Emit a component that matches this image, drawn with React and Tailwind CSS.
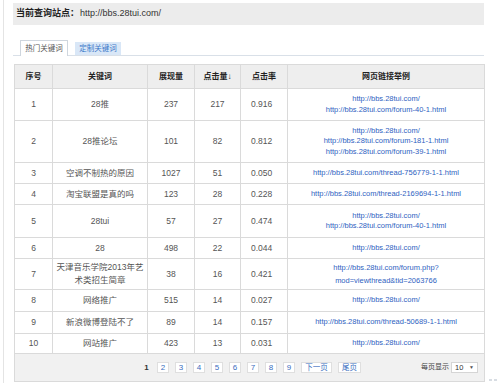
import React from "react";

const rows = [
  { id: 1, kw: "28推", shown: 237, clicks: 217, rate: "0.916", h: "h-[32px]", links: ["http://bbs.28tui.com/", "http://bbs.28tui.com/forum-40-1.html"] },
  { id: 2, kw: "28推论坛", shown: 101, clicks: 82, rate: "0.812", h: "h-[42px]", links: ["http://bbs.28tui.com/", "http://bbs.28tui.com/forum-181-1.html", "http://bbs.28tui.com/forum-39-1.html"] },
  { id: 3, kw: "空调不制热的原因", shown: 1027, clicks: 51, rate: "0.050", h: "h-[21px]", links: ["http://bbs.28tui.com/thread-756779-1-1.html"] },
  { id: 4, kw: "淘宝联盟是真的吗", shown: 123, clicks: 28, rate: "0.228", h: "h-[21px]", links: ["http://bbs.28tui.com/thread-2169694-1-1.html"] },
  { id: 5, kw: "28tui", shown: 57, clicks: 27, rate: "0.474", h: "h-[33px]", links: ["http://bbs.28tui.com/", "http://bbs.28tui.com/forum-40-1.html"] },
  { id: 6, kw: "28", shown: 498, clicks: 22, rate: "0.044", h: "h-[21px]", links: ["http://bbs.28tui.com/"] },
  { id: 7, kw: ["天津音乐学院2013年艺", "术类招生简章"], shown: 38, clicks: 16, rate: "0.421", h: "h-[31px]", links: ["http://bbs.28tui.com/forum.php?", "mod=viewthread&tid=2063766"] },
  { id: 8, kw: "网络推广", shown: 515, clicks: 14, rate: "0.027", h: "h-[22px]", links: ["http://bbs.28tui.com/"] },
  { id: 9, kw: "新浪微博登陆不了", shown: 89, clicks: 14, rate: "0.157", h: "h-[22px]", links: ["http://bbs.28tui.com/thread-50689-1-1.html"] },
  { id: 10, kw: "网站推广", shown: 423, clicks: 13, rate: "0.031", h: "h-[20px]", links: ["http://bbs.28tui.com/"] },
];

const font = "font-['Liberation_Sans','Noto_Sans_CJK_SC',sans-serif]";

const App = () => {
  return (
    <div className={`w-[500px] h-[383px] bg-white flex overflow-hidden ${font}`}>
      {/* left frame line */}
      <div className="ml-[3px] w-px h-full bg-[#e4e4e4]" />

      <div className="ml-[9px] w-[471px] flex flex-col">
        {/* current site */}
        <div className="mt-[3px] h-[22px] bg-[#ececec] flex items-center pl-[3px] text-[9px] text-[#333]">
          <span className="font-bold text-[#222]">当前查询站点：</span>
          <span className="ml-[1px]">http://bbs.28tui.com/</span>
        </div>

        {/* tabs */}
        <div className="mt-[15px] h-[16px] flex items-end border-b border-[#d9e0e8]">
          <div className="ml-[7px] w-[48px] h-[16px] bg-white border border-b-0 border-[#cfd6de] flex items-center justify-center text-[7.5px] text-[#555] -mb-px">
            热门关键词
          </div>
          <div className="ml-[7px] w-[46px] h-[13px] bg-[#d9e7f7] flex items-center justify-center text-[7.5px] text-[#3b78c9]">
            定制关键词
          </div>
        </div>

        {/* table */}
        <div className="mt-[8px] ml-px w-[470px]">
          <table className="w-[470px] border-collapse table-fixed text-[#555]">
            <colgroup>
              <col className="w-[38px]" />
              <col className="w-[95px]" />
              <col className="w-[47px]" />
              <col className="w-[46px]" />
              <col className="w-[47px]" />
              <col className="w-[197px]" />
            </colgroup>
            <thead>
              <tr className="h-[24px] bg-[#eeeeee] text-[8px] font-bold text-[#222]">
                <th className="border border-[#dadada]">序号</th>
                <th className="border border-[#dadada]">关键词</th>
                <th className="border border-[#dadada]">展现量</th>
                <th className="border border-[#dadada]">点击量↓</th>
                <th className="border border-[#dadada]">点击率</th>
                <th className="border border-[#dadada]">网页链接举例</th>
              </tr>
            </thead>
            <tbody>
              {rows.map((r) => (
                <tr key={r.id} className={`${r.h} bg-white`}>
                  <td className="border border-[#dadada] text-center text-[8.5px]">{r.id}</td>
                  <td className="border border-[#dadada] text-center text-[8.5px] leading-[13px]">
                    {Array.isArray(r.kw) ? (
                      <>
                        {r.kw[0]}
                        <br />
                        {r.kw[1]}
                      </>
                    ) : (
                      r.kw
                    )}
                  </td>
                  <td className="border border-[#dadada] text-center text-[8.5px]">{r.shown}</td>
                  <td className="border border-[#dadada] text-center text-[8.5px]">{r.clicks}</td>
                  <td className="border border-[#dadada] text-left pl-[10px] text-[8.5px]">{r.rate}</td>
                  <td className={`border border-[#dadada] text-center text-[7.5px] text-[#2f5fbf] ${r.id === 7 ? "leading-[13px]" : "leading-[10.5px]"}`}>
                    {r.links.map((l) => (
                      <div key={l}>{l}</div>
                    ))}
                  </td>
                </tr>
              ))}
              <tr className="h-[28px] bg-[#f1f1f1]">
                <td colSpan={6} className="border border-[#dadada] p-0">
                  <div className="flex items-center pl-[127px] pr-[6px]">
                    <div className="flex items-center gap-[6px] text-[8px]">
                      <span className="w-[9px] text-center font-bold text-[#333]">1</span>
                      {[2, 3, 4, 5, 6, 7, 8, 9].map((n) => (
                        <span
                          key={n}
                          className="w-[12px] h-[11px] bg-white border border-[#dfdfdf] flex items-center justify-center text-[#3a6ec0]"
                        >
                          {n}
                        </span>
                      ))}
                      <span className="w-[31px] h-[11px] bg-white border border-[#dfdfdf] flex items-center justify-center text-[7.5px] text-[#3a6ec0]">
                        下一页
                      </span>
                      <span className="w-[23px] h-[11px] bg-white border border-[#dfdfdf] flex items-center justify-center text-[7.5px] text-[#3a6ec0]">
                        尾页
                      </span>
                    </div>
                    <div className="ml-auto flex items-center whitespace-nowrap text-[7px] text-[#444]">
                      <span>每页显示</span>
                      <span className="ml-[2px] w-[27px] h-[11px] bg-white border border-[#d5d5d5] flex items-center justify-between px-[3px] text-[7.5px] text-[#333]">
                        <span>10</span>
                        <span className="text-[5px] text-[#555]">▼</span>
                      </span>
                    </div>
                  </div>
                </td>
              </tr>
            </tbody>
          </table>
        </div>
      </div>

      {/* resize grip */}
      <div className="ml-[5px] mt-auto mb-[2px] w-[9px] h-[4px] flex gap-[2px] items-end">
        <div className="w-[3px] h-[2px] bg-[#d8dde3]" />
        <div className="w-[3px] h-[2px] bg-[#d8dde3]" />
      </div>
    </div>
  );
};

export default App;
